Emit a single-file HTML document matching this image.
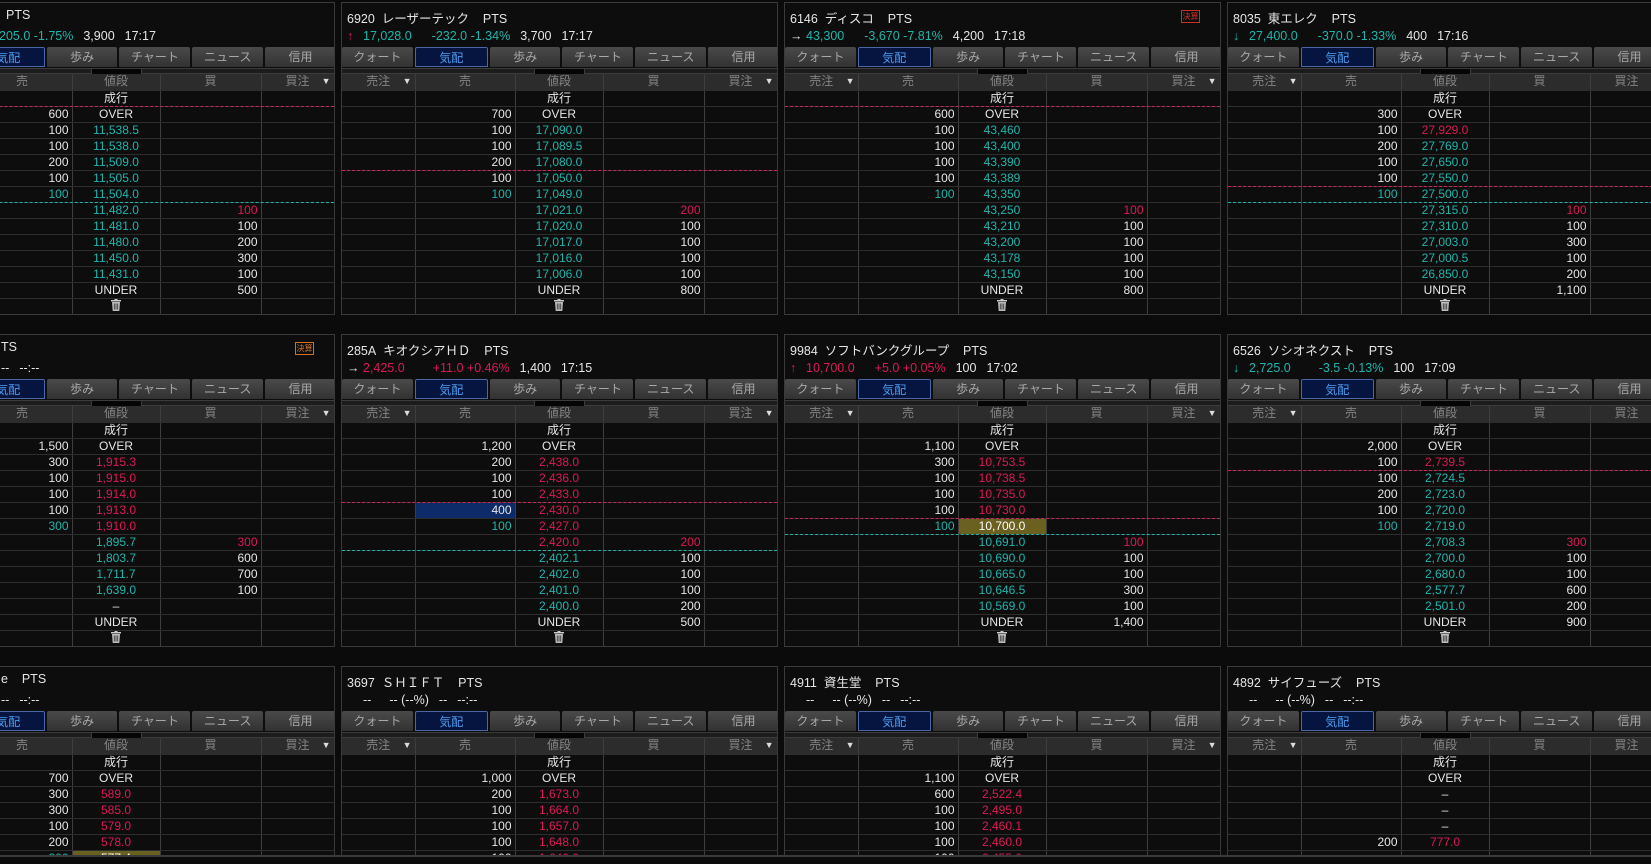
<!DOCTYPE html>
<html><head><meta charset="utf-8">
<style>
*{box-sizing:border-box}
html,body{margin:0;width:1651px;height:864px;overflow:hidden}
body{background:#0b0b0b;font-family:"Liberation Sans","Noto Sans CJK JP",sans-serif;color:#e6e6e6}
#w{position:relative;width:1651px;height:864px;overflow:hidden}
.p{position:absolute;width:437px;height:313px;background:#0d0d0d;border:1px solid #3a3a3a;overflow:hidden}
.p.b{height:200px}
.h1{position:absolute;left:5px;top:5px;font-size:12.5px;white-space:nowrap}
.h2{position:absolute;left:5px;top:26px;font-size:12.5px;white-space:nowrap}
.h2 span{margin-right:10px}
.h2 .ar{display:inline-block;width:12px;margin-right:4px}
.h2 .pr{margin-right:20px}
.badge{position:absolute;left:396px;top:7px;width:19px;height:13px;border:1px solid;font-size:8px;line-height:11px;text-align:center}
.tabs{position:absolute;left:0;top:44px;width:437px;height:20px;display:flex;gap:2px}
.tab{flex:1;background:linear-gradient(#4a4a4a,#323232);color:#a8a8a8;font-size:12px;text-align:center;line-height:20px;border-radius:2px 2px 0 0}
.tab.on{background:#061540;color:#4c9cf0;border:1px solid #4a68a6}
.strip{position:absolute;left:0;top:65px;width:437px;height:6px;background:#1c1c1c;border-top:1px solid #3c3c3c;border-bottom:1px solid #3c3c3c}
.strip i{position:absolute;left:192px;top:-1px;width:51px;height:7px;background:#050505;border:1px solid #3c3c3c}
table{position:absolute;left:0;top:71px;border-collapse:collapse;table-layout:fixed;width:435px;font-size:12px}
td{height:16px;padding:0 3px;border-right:1px solid #3e3e3e;border-bottom:1px solid #2e2e2e;white-space:nowrap;line-height:15px}
td:nth-child(2),td:nth-child(4){text-align:right}
td:nth-child(3){text-align:center}
tr.hd td{background:#2c2c2c;color:#848484;text-align:center;position:relative}
tr.hd td.dn::after{content:"▼";position:absolute;right:3px;top:0;font-size:9px;color:#ddd}
.g{color:#1fb5ad}.r{color:#dc1a55}
.dr,.dg{position:absolute;left:0;width:435px;height:0;border-top:1px dashed #c8285a}
.dg{border-top-color:#22b0a8}
.hb{background:#0c2b68}
.ho{background:#6a6020;color:#fff}
.cover{position:absolute;left:0;top:855px;width:1651px;height:9px;background:#0b0b0b;border-top:2px solid #3a3a3a}
</style></head><body><div id="w">

<!-- ROW 1 -->
<div class="p" style="left:-102px;top:2px">
<div class="h1" style="left:107px">PTS</div>
<div class="h2" style="left:100px"><span class="g">205.0 -1.75%</span><span>3,900</span><span>17:17</span></div>
<div class="tabs"><div class="tab">クォート</div><div class="tab on">気配</div><div class="tab">歩み</div><div class="tab">チャート</div><div class="tab">ニュース</div><div class="tab">信用</div></div>
<div class="strip"><i></i></div>
<table><colgroup><col style="width:73px"><col style="width:100px"><col style="width:88px"><col style="width:101px"><col style="width:73px"></colgroup>
<tr class="hd"><td class="dn">売注</td><td>売</td><td>値段</td><td>買</td><td class="dn">買注</td></tr>
<tr><td></td><td></td><td>成行</td><td></td><td></td></tr>
<tr><td></td><td>600</td><td>OVER</td><td></td><td></td></tr>
<tr><td></td><td>100</td><td class="g">11,538.5</td><td></td><td></td></tr>
<tr><td></td><td>100</td><td class="g">11,538.0</td><td></td><td></td></tr>
<tr><td></td><td>200</td><td class="g">11,509.0</td><td></td><td></td></tr>
<tr><td></td><td>100</td><td class="g">11,505.0</td><td></td><td></td></tr>
<tr><td></td><td class="g">100</td><td class="g">11,504.0</td><td></td><td></td></tr>
<tr><td></td><td></td><td class="g">11,482.0</td><td class="r">100</td><td></td></tr>
<tr><td></td><td></td><td class="g">11,481.0</td><td>100</td><td></td></tr>
<tr><td></td><td></td><td class="g">11,480.0</td><td>200</td><td></td></tr>
<tr><td></td><td></td><td class="g">11,450.0</td><td>300</td><td></td></tr>
<tr><td></td><td></td><td class="g">11,431.0</td><td>100</td><td></td></tr>
<tr><td></td><td></td><td>UNDER</td><td>500</td><td></td></tr>
<tr><td></td><td></td><td><svg width="10" height="12" viewBox="0 0 10 12"><rect x="0" y="1" width="10" height="1.5" fill="#ccc"/><rect x="3.5" y="0" width="3" height="1.5" fill="#ccc"/><path d="M1 3h8l-.7 9H1.7z" fill="#bbb"/><path d="M3.3 4.5v6M5 4.5v6M6.7 4.5v6" stroke="#333" stroke-width=".8"/></svg></td><td></td><td></td></tr>
</table>
<div class="dr" style="top:103px"></div><div class="dg" style="top:199px"></div>
</div>

<div class="p" style="left:341px;top:2px">
<div class="h1">6920&nbsp; レーザーテック&nbsp;&nbsp;&nbsp; PTS</div>
<div class="h2"><span class="ar r">↑</span><span class="g pr">17,028.0</span><span class="g">-232.0 -1.34%</span><span>3,700</span><span>17:17</span></div>
<div class="tabs"><div class="tab">クォート</div><div class="tab on">気配</div><div class="tab">歩み</div><div class="tab">チャート</div><div class="tab">ニュース</div><div class="tab">信用</div></div>
<div class="strip"><i></i></div>
<table><colgroup><col style="width:73px"><col style="width:100px"><col style="width:88px"><col style="width:101px"><col style="width:73px"></colgroup>
<tr class="hd"><td class="dn">売注</td><td>売</td><td>値段</td><td>買</td><td class="dn">買注</td></tr>
<tr><td></td><td></td><td>成行</td><td></td><td></td></tr>
<tr><td></td><td>700</td><td>OVER</td><td></td><td></td></tr>
<tr><td></td><td>100</td><td class="g">17,090.0</td><td></td><td></td></tr>
<tr><td></td><td>100</td><td class="g">17,089.5</td><td></td><td></td></tr>
<tr><td></td><td>200</td><td class="g">17,080.0</td><td></td><td></td></tr>
<tr><td></td><td>100</td><td class="g">17,050.0</td><td></td><td></td></tr>
<tr><td></td><td class="g">100</td><td class="g">17,049.0</td><td></td><td></td></tr>
<tr><td></td><td></td><td class="g">17,021.0</td><td class="r">200</td><td></td></tr>
<tr><td></td><td></td><td class="g">17,020.0</td><td>100</td><td></td></tr>
<tr><td></td><td></td><td class="g">17,017.0</td><td>100</td><td></td></tr>
<tr><td></td><td></td><td class="g">17,016.0</td><td>100</td><td></td></tr>
<tr><td></td><td></td><td class="g">17,006.0</td><td>100</td><td></td></tr>
<tr><td></td><td></td><td>UNDER</td><td>800</td><td></td></tr>
<tr><td></td><td></td><td><svg width="10" height="12" viewBox="0 0 10 12"><rect x="0" y="1" width="10" height="1.5" fill="#ccc"/><rect x="3.5" y="0" width="3" height="1.5" fill="#ccc"/><path d="M1 3h8l-.7 9H1.7z" fill="#bbb"/><path d="M3.3 4.5v6M5 4.5v6M6.7 4.5v6" stroke="#333" stroke-width=".8"/></svg></td><td></td><td></td></tr>
</table>
<div class="dr" style="top:167px"></div>
</div>

<div class="p" style="left:784px;top:2px">
<div class="h1">6146&nbsp; ディスコ&nbsp;&nbsp;&nbsp; PTS</div>
<div class="badge" style="color:#c8302a;border-color:#c8302a">決算</div>
<div class="h2"><span class="ar">→</span><span class="g pr">43,300</span><span class="g">-3,670 -7.81%</span><span>4,200</span><span>17:18</span></div>
<div class="tabs"><div class="tab">クォート</div><div class="tab on">気配</div><div class="tab">歩み</div><div class="tab">チャート</div><div class="tab">ニュース</div><div class="tab">信用</div></div>
<div class="strip"><i></i></div>
<table><colgroup><col style="width:73px"><col style="width:100px"><col style="width:88px"><col style="width:101px"><col style="width:73px"></colgroup>
<tr class="hd"><td class="dn">売注</td><td>売</td><td>値段</td><td>買</td><td class="dn">買注</td></tr>
<tr><td></td><td></td><td>成行</td><td></td><td></td></tr>
<tr><td></td><td>600</td><td>OVER</td><td></td><td></td></tr>
<tr><td></td><td>100</td><td class="g">43,460</td><td></td><td></td></tr>
<tr><td></td><td>100</td><td class="g">43,400</td><td></td><td></td></tr>
<tr><td></td><td>100</td><td class="g">43,390</td><td></td><td></td></tr>
<tr><td></td><td>100</td><td class="g">43,389</td><td></td><td></td></tr>
<tr><td></td><td class="g">100</td><td class="g">43,350</td><td></td><td></td></tr>
<tr><td></td><td></td><td class="g">43,250</td><td class="r">100</td><td></td></tr>
<tr><td></td><td></td><td class="g">43,210</td><td>100</td><td></td></tr>
<tr><td></td><td></td><td class="g">43,200</td><td>100</td><td></td></tr>
<tr><td></td><td></td><td class="g">43,178</td><td>100</td><td></td></tr>
<tr><td></td><td></td><td class="g">43,150</td><td>100</td><td></td></tr>
<tr><td></td><td></td><td>UNDER</td><td>800</td><td></td></tr>
<tr><td></td><td></td><td><svg width="10" height="12" viewBox="0 0 10 12"><rect x="0" y="1" width="10" height="1.5" fill="#ccc"/><rect x="3.5" y="0" width="3" height="1.5" fill="#ccc"/><path d="M1 3h8l-.7 9H1.7z" fill="#bbb"/><path d="M3.3 4.5v6M5 4.5v6M6.7 4.5v6" stroke="#333" stroke-width=".8"/></svg></td><td></td><td></td></tr>
</table>
<div class="dr" style="top:103px"></div>
</div>

<div class="p" style="left:1227px;top:2px">
<div class="h1">8035&nbsp; 東エレク&nbsp;&nbsp;&nbsp; PTS</div>
<div class="h2"><span class="ar g">↓</span><span class="g pr">27,400.0</span><span class="g">-370.0 -1.33%</span><span>400</span><span>17:16</span></div>
<div class="tabs"><div class="tab">クォート</div><div class="tab on">気配</div><div class="tab">歩み</div><div class="tab">チャート</div><div class="tab">ニュース</div><div class="tab">信用</div></div>
<div class="strip"><i></i></div>
<table><colgroup><col style="width:73px"><col style="width:100px"><col style="width:88px"><col style="width:101px"><col style="width:73px"></colgroup>
<tr class="hd"><td class="dn">売注</td><td>売</td><td>値段</td><td>買</td><td class="dn">買注</td></tr>
<tr><td></td><td></td><td>成行</td><td></td><td></td></tr>
<tr><td></td><td>300</td><td>OVER</td><td></td><td></td></tr>
<tr><td></td><td>100</td><td class="r">27,929.0</td><td></td><td></td></tr>
<tr><td></td><td>200</td><td class="g">27,769.0</td><td></td><td></td></tr>
<tr><td></td><td>100</td><td class="g">27,650.0</td><td></td><td></td></tr>
<tr><td></td><td>100</td><td class="g">27,550.0</td><td></td><td></td></tr>
<tr><td></td><td class="g">100</td><td class="g">27,500.0</td><td></td><td></td></tr>
<tr><td></td><td></td><td class="g">27,315.0</td><td class="r">100</td><td></td></tr>
<tr><td></td><td></td><td class="g">27,310.0</td><td>100</td><td></td></tr>
<tr><td></td><td></td><td class="g">27,003.0</td><td>300</td><td></td></tr>
<tr><td></td><td></td><td class="g">27,000.5</td><td>100</td><td></td></tr>
<tr><td></td><td></td><td class="g">26,850.0</td><td>200</td><td></td></tr>
<tr><td></td><td></td><td>UNDER</td><td>1,100</td><td></td></tr>
<tr><td></td><td></td><td><svg width="10" height="12" viewBox="0 0 10 12"><rect x="0" y="1" width="10" height="1.5" fill="#ccc"/><rect x="3.5" y="0" width="3" height="1.5" fill="#ccc"/><path d="M1 3h8l-.7 9H1.7z" fill="#bbb"/><path d="M3.3 4.5v6M5 4.5v6M6.7 4.5v6" stroke="#333" stroke-width=".8"/></svg></td><td></td><td></td></tr>
</table>
<div class="dr" style="top:183px"></div><div class="dg" style="top:199px"></div>
</div>

<!-- ROW 2 -->
<div class="p" style="left:-102px;top:334px">
<div class="h1" style="left:102px">TS</div>
<div class="badge" style="color:#d07020;border-color:#d07020">決算</div>
<div class="h2" style="left:102px"><span>--</span><span>--:--</span></div>
<div class="tabs"><div class="tab">クォート</div><div class="tab on">気配</div><div class="tab">歩み</div><div class="tab">チャート</div><div class="tab">ニュース</div><div class="tab">信用</div></div>
<div class="strip"><i></i></div>
<table><colgroup><col style="width:73px"><col style="width:100px"><col style="width:88px"><col style="width:101px"><col style="width:73px"></colgroup>
<tr class="hd"><td class="dn">売注</td><td>売</td><td>値段</td><td>買</td><td class="dn">買注</td></tr>
<tr><td></td><td></td><td>成行</td><td></td><td></td></tr>
<tr><td></td><td>1,500</td><td>OVER</td><td></td><td></td></tr>
<tr><td></td><td>300</td><td class="r">1,915.3</td><td></td><td></td></tr>
<tr><td></td><td>100</td><td class="r">1,915.0</td><td></td><td></td></tr>
<tr><td></td><td>100</td><td class="r">1,914.0</td><td></td><td></td></tr>
<tr><td></td><td>100</td><td class="r">1,913.0</td><td></td><td></td></tr>
<tr><td></td><td class="g">300</td><td class="r">1,910.0</td><td></td><td></td></tr>
<tr><td></td><td></td><td class="g">1,895.7</td><td class="r">300</td><td></td></tr>
<tr><td></td><td></td><td class="g">1,803.7</td><td>600</td><td></td></tr>
<tr><td></td><td></td><td class="g">1,711.7</td><td>700</td><td></td></tr>
<tr><td></td><td></td><td class="g">1,639.0</td><td>100</td><td></td></tr>
<tr><td></td><td></td><td>–</td><td></td><td></td></tr>
<tr><td></td><td></td><td>UNDER</td><td></td><td></td></tr>
<tr><td></td><td></td><td><svg width="10" height="12" viewBox="0 0 10 12"><rect x="0" y="1" width="10" height="1.5" fill="#ccc"/><rect x="3.5" y="0" width="3" height="1.5" fill="#ccc"/><path d="M1 3h8l-.7 9H1.7z" fill="#bbb"/><path d="M3.3 4.5v6M5 4.5v6M6.7 4.5v6" stroke="#333" stroke-width=".8"/></svg></td><td></td><td></td></tr>
</table>
</div>

<div class="p" style="left:341px;top:334px">
<div class="h1">285A&nbsp; キオクシアＨＤ&nbsp;&nbsp;&nbsp; PTS</div>
<div class="h2"><span class="ar">→</span><span class="r pr">2,425.0</span><span class="r" style="margin-left:8px">+11.0 +0.46%</span><span>1,400</span><span>17:15</span></div>
<div class="tabs"><div class="tab">クォート</div><div class="tab on">気配</div><div class="tab">歩み</div><div class="tab">チャート</div><div class="tab">ニュース</div><div class="tab">信用</div></div>
<div class="strip"><i></i></div>
<table><colgroup><col style="width:73px"><col style="width:100px"><col style="width:88px"><col style="width:101px"><col style="width:73px"></colgroup>
<tr class="hd"><td class="dn">売注</td><td>売</td><td>値段</td><td>買</td><td class="dn">買注</td></tr>
<tr><td></td><td></td><td>成行</td><td></td><td></td></tr>
<tr><td></td><td>1,200</td><td>OVER</td><td></td><td></td></tr>
<tr><td></td><td>200</td><td class="r">2,438.0</td><td></td><td></td></tr>
<tr><td></td><td>100</td><td class="r">2,436.0</td><td></td><td></td></tr>
<tr><td></td><td>100</td><td class="r">2,433.0</td><td></td><td></td></tr>
<tr><td></td><td class="hb">400</td><td class="r">2,430.0</td><td></td><td></td></tr>
<tr><td></td><td class="g">100</td><td class="r">2,427.0</td><td></td><td></td></tr>
<tr><td></td><td></td><td class="r">2,420.0</td><td class="r">200</td><td></td></tr>
<tr><td></td><td></td><td class="g">2,402.1</td><td>100</td><td></td></tr>
<tr><td></td><td></td><td class="g">2,402.0</td><td>100</td><td></td></tr>
<tr><td></td><td></td><td class="g">2,401.0</td><td>100</td><td></td></tr>
<tr><td></td><td></td><td class="g">2,400.0</td><td>200</td><td></td></tr>
<tr><td></td><td></td><td>UNDER</td><td>500</td><td></td></tr>
<tr><td></td><td></td><td><svg width="10" height="12" viewBox="0 0 10 12"><rect x="0" y="1" width="10" height="1.5" fill="#ccc"/><rect x="3.5" y="0" width="3" height="1.5" fill="#ccc"/><path d="M1 3h8l-.7 9H1.7z" fill="#bbb"/><path d="M3.3 4.5v6M5 4.5v6M6.7 4.5v6" stroke="#333" stroke-width=".8"/></svg></td><td></td><td></td></tr>
</table>
<div class="dr" style="top:167px"></div><div class="dg" style="top:215px"></div>
</div>

<div class="p" style="left:784px;top:334px">
<div class="h1">9984&nbsp; ソフトバンクグループ&nbsp;&nbsp;&nbsp; PTS</div>
<div class="h2"><span class="ar r">↑</span><span class="r pr">10,700.0</span><span class="r">+5.0 +0.05%</span><span>100</span><span>17:02</span></div>
<div class="tabs"><div class="tab">クォート</div><div class="tab on">気配</div><div class="tab">歩み</div><div class="tab">チャート</div><div class="tab">ニュース</div><div class="tab">信用</div></div>
<div class="strip"><i></i></div>
<table><colgroup><col style="width:73px"><col style="width:100px"><col style="width:88px"><col style="width:101px"><col style="width:73px"></colgroup>
<tr class="hd"><td class="dn">売注</td><td>売</td><td>値段</td><td>買</td><td class="dn">買注</td></tr>
<tr><td></td><td></td><td>成行</td><td></td><td></td></tr>
<tr><td></td><td>1,100</td><td>OVER</td><td></td><td></td></tr>
<tr><td></td><td>300</td><td class="r">10,753.5</td><td></td><td></td></tr>
<tr><td></td><td>100</td><td class="r">10,738.5</td><td></td><td></td></tr>
<tr><td></td><td>100</td><td class="r">10,735.0</td><td></td><td></td></tr>
<tr><td></td><td>100</td><td class="r">10,730.0</td><td></td><td></td></tr>
<tr><td></td><td class="g">100</td><td class="ho">10,700.0</td><td></td><td></td></tr>
<tr><td></td><td></td><td class="g">10,691.0</td><td class="r">100</td><td></td></tr>
<tr><td></td><td></td><td class="g">10,690.0</td><td>100</td><td></td></tr>
<tr><td></td><td></td><td class="g">10,665.0</td><td>100</td><td></td></tr>
<tr><td></td><td></td><td class="g">10,646.5</td><td>300</td><td></td></tr>
<tr><td></td><td></td><td class="g">10,569.0</td><td>100</td><td></td></tr>
<tr><td></td><td></td><td>UNDER</td><td>1,400</td><td></td></tr>
<tr><td></td><td></td><td><svg width="10" height="12" viewBox="0 0 10 12"><rect x="0" y="1" width="10" height="1.5" fill="#ccc"/><rect x="3.5" y="0" width="3" height="1.5" fill="#ccc"/><path d="M1 3h8l-.7 9H1.7z" fill="#bbb"/><path d="M3.3 4.5v6M5 4.5v6M6.7 4.5v6" stroke="#333" stroke-width=".8"/></svg></td><td></td><td></td></tr>
</table>
<div class="dr" style="top:183px"></div><div class="dg" style="top:199px"></div>
</div>

<div class="p" style="left:1227px;top:334px">
<div class="h1">6526&nbsp; ソシオネクスト&nbsp;&nbsp;&nbsp; PTS</div>
<div class="h2"><span class="ar g">↓</span><span class="g pr">2,725.0</span><span class="g" style="margin-left:8px">-3.5 -0.13%</span><span>100</span><span>17:09</span></div>
<div class="tabs"><div class="tab">クォート</div><div class="tab on">気配</div><div class="tab">歩み</div><div class="tab">チャート</div><div class="tab">ニュース</div><div class="tab">信用</div></div>
<div class="strip"><i></i></div>
<table><colgroup><col style="width:73px"><col style="width:100px"><col style="width:88px"><col style="width:101px"><col style="width:73px"></colgroup>
<tr class="hd"><td class="dn">売注</td><td>売</td><td>値段</td><td>買</td><td class="dn">買注</td></tr>
<tr><td></td><td></td><td>成行</td><td></td><td></td></tr>
<tr><td></td><td>2,000</td><td>OVER</td><td></td><td></td></tr>
<tr><td></td><td>100</td><td class="r">2,739.5</td><td></td><td></td></tr>
<tr><td></td><td>100</td><td class="g">2,724.5</td><td></td><td></td></tr>
<tr><td></td><td>200</td><td class="g">2,723.0</td><td></td><td></td></tr>
<tr><td></td><td>100</td><td class="g">2,720.0</td><td></td><td></td></tr>
<tr><td></td><td class="g">100</td><td class="g">2,719.0</td><td></td><td></td></tr>
<tr><td></td><td></td><td class="g">2,708.3</td><td class="r">300</td><td></td></tr>
<tr><td></td><td></td><td class="g">2,700.0</td><td>100</td><td></td></tr>
<tr><td></td><td></td><td class="g">2,680.0</td><td>100</td><td></td></tr>
<tr><td></td><td></td><td class="g">2,577.7</td><td>600</td><td></td></tr>
<tr><td></td><td></td><td class="g">2,501.0</td><td>200</td><td></td></tr>
<tr><td></td><td></td><td>UNDER</td><td>900</td><td></td></tr>
<tr><td></td><td></td><td><svg width="10" height="12" viewBox="0 0 10 12"><rect x="0" y="1" width="10" height="1.5" fill="#ccc"/><rect x="3.5" y="0" width="3" height="1.5" fill="#ccc"/><path d="M1 3h8l-.7 9H1.7z" fill="#bbb"/><path d="M3.3 4.5v6M5 4.5v6M6.7 4.5v6" stroke="#333" stroke-width=".8"/></svg></td><td></td><td></td></tr>
</table>
<div class="dr" style="top:135px"></div>
</div>

<!-- ROW 3 -->
<div class="p b" style="left:-102px;top:666px">
<div class="h1" style="left:102px">e&nbsp;&nbsp;&nbsp; PTS</div>
<div class="h2" style="left:102px"><span>--</span><span>--:--</span></div>
<div class="tabs"><div class="tab">クォート</div><div class="tab on">気配</div><div class="tab">歩み</div><div class="tab">チャート</div><div class="tab">ニュース</div><div class="tab">信用</div></div>
<div class="strip"><i></i></div>
<table><colgroup><col style="width:73px"><col style="width:100px"><col style="width:88px"><col style="width:101px"><col style="width:73px"></colgroup>
<tr class="hd"><td class="dn">売注</td><td>売</td><td>値段</td><td>買</td><td class="dn">買注</td></tr>
<tr><td></td><td></td><td>成行</td><td></td><td></td></tr>
<tr><td></td><td>700</td><td>OVER</td><td></td><td></td></tr>
<tr><td></td><td>300</td><td class="r">589.0</td><td></td><td></td></tr>
<tr><td></td><td>300</td><td class="r">585.0</td><td></td><td></td></tr>
<tr><td></td><td>100</td><td class="r">579.0</td><td></td><td></td></tr>
<tr><td></td><td>200</td><td class="r">578.0</td><td></td><td></td></tr>
<tr><td></td><td class="g">300</td><td class="ho">577.4</td><td></td><td></td></tr>
</table>
</div>

<div class="p b" style="left:341px;top:666px">
<div class="h1">3697&nbsp; ＳＨＩＦＴ&nbsp;&nbsp;&nbsp; PTS</div>
<div class="h2"><span class="ar"></span><span style="margin-right:18px">--</span><span>-- (--%)</span><span>--</span><span>--:--</span></div>
<div class="tabs"><div class="tab">クォート</div><div class="tab on">気配</div><div class="tab">歩み</div><div class="tab">チャート</div><div class="tab">ニュース</div><div class="tab">信用</div></div>
<div class="strip"><i></i></div>
<table><colgroup><col style="width:73px"><col style="width:100px"><col style="width:88px"><col style="width:101px"><col style="width:73px"></colgroup>
<tr class="hd"><td class="dn">売注</td><td>売</td><td>値段</td><td>買</td><td class="dn">買注</td></tr>
<tr><td></td><td></td><td>成行</td><td></td><td></td></tr>
<tr><td></td><td>1,000</td><td>OVER</td><td></td><td></td></tr>
<tr><td></td><td>200</td><td class="r">1,673.0</td><td></td><td></td></tr>
<tr><td></td><td>100</td><td class="r">1,664.0</td><td></td><td></td></tr>
<tr><td></td><td>100</td><td class="r">1,657.0</td><td></td><td></td></tr>
<tr><td></td><td>100</td><td class="r">1,648.0</td><td></td><td></td></tr>
<tr><td></td><td>100</td><td class="r">1,640.0</td><td></td><td></td></tr>
</table>
</div>

<div class="p b" style="left:784px;top:666px">
<div class="h1">4911&nbsp; 資生堂&nbsp;&nbsp;&nbsp; PTS</div>
<div class="h2"><span class="ar"></span><span style="margin-right:18px">--</span><span>-- (--%)</span><span>--</span><span>--:--</span></div>
<div class="tabs"><div class="tab">クォート</div><div class="tab on">気配</div><div class="tab">歩み</div><div class="tab">チャート</div><div class="tab">ニュース</div><div class="tab">信用</div></div>
<div class="strip"><i></i></div>
<table><colgroup><col style="width:73px"><col style="width:100px"><col style="width:88px"><col style="width:101px"><col style="width:73px"></colgroup>
<tr class="hd"><td class="dn">売注</td><td>売</td><td>値段</td><td>買</td><td class="dn">買注</td></tr>
<tr><td></td><td></td><td>成行</td><td></td><td></td></tr>
<tr><td></td><td>1,100</td><td>OVER</td><td></td><td></td></tr>
<tr><td></td><td>600</td><td class="r">2,522.4</td><td></td><td></td></tr>
<tr><td></td><td>100</td><td class="r">2,495.0</td><td></td><td></td></tr>
<tr><td></td><td>100</td><td class="r">2,460.1</td><td></td><td></td></tr>
<tr><td></td><td>100</td><td class="r">2,460.0</td><td></td><td></td></tr>
<tr><td></td><td>100</td><td class="r">2,455.0</td><td></td><td></td></tr>
</table>
</div>

<div class="p b" style="left:1227px;top:666px">
<div class="h1">4892&nbsp; サイフューズ&nbsp;&nbsp;&nbsp; PTS</div>
<div class="h2"><span class="ar"></span><span style="margin-right:18px">--</span><span>-- (--%)</span><span>--</span><span>--:--</span></div>
<div class="tabs"><div class="tab">クォート</div><div class="tab on">気配</div><div class="tab">歩み</div><div class="tab">チャート</div><div class="tab">ニュース</div><div class="tab">信用</div></div>
<div class="strip"><i></i></div>
<table><colgroup><col style="width:73px"><col style="width:100px"><col style="width:88px"><col style="width:101px"><col style="width:73px"></colgroup>
<tr class="hd"><td class="dn">売注</td><td>売</td><td>値段</td><td>買</td><td class="dn">買注</td></tr>
<tr><td></td><td></td><td>成行</td><td></td><td></td></tr>
<tr><td></td><td></td><td>OVER</td><td></td><td></td></tr>
<tr><td></td><td></td><td>–</td><td></td><td></td></tr>
<tr><td></td><td></td><td>–</td><td></td><td></td></tr>
<tr><td></td><td></td><td>–</td><td></td><td></td></tr>
<tr><td></td><td>200</td><td class="r">777.0</td><td></td><td></td></tr>
<tr><td></td><td></td><td></td><td></td><td></td></tr>
</table>
</div>

<div class="cover"></div>
</div></body></html>
